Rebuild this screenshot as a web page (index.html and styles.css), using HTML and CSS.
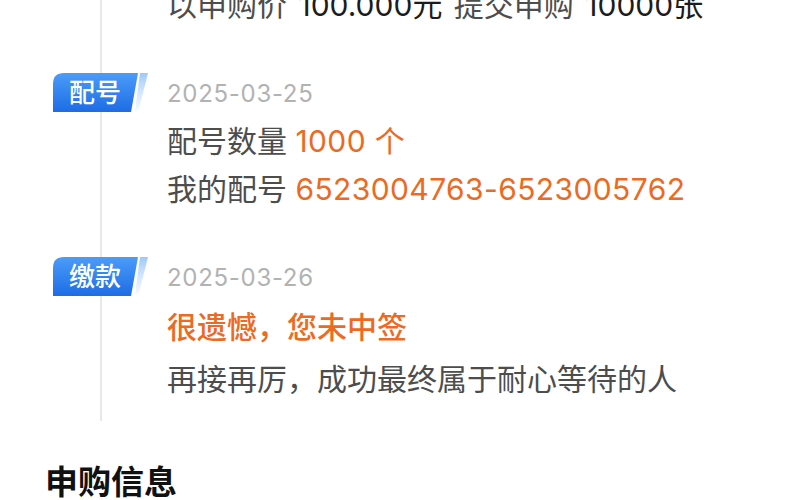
FILE: index.html
```html
<!DOCTYPE html>
<html lang="zh-CN">
<head>
<meta charset="utf-8">
<title>新股申购进度</title>
<link rel="stylesheet" href="styles.css">
</head>
<body>
<main class="page">
  <section class="timeline">
    <div class="step step-partial">
      <div class="step-side"></div>
      <div class="step-body">
        <p class="line summary"><span class="label">以申购价</span> <span class="strong">100.000元</span> <span class="label">提交申购</span> <span class="strong">10000张</span></p>
      </div>
    </div>

    <div class="step">
      <div class="step-side">
        <div class="badge">
          <svg class="badge-bg" viewBox="0 0 96 40" aria-hidden="true">
            <defs>
              <linearGradient id="bg1" x1="0" y1="0" x2="0" y2="1">
                <stop offset="0" stop-color="#4b9cf9"/>
                <stop offset="1" stop-color="#1d6ce6"/>
              </linearGradient>
              <linearGradient id="sl1" x1="0" y1="0" x2="0" y2="1">
                <stop offset="0" stop-color="#9cc8fa"/>
                <stop offset="1" stop-color="#d6e8fd" stop-opacity="0.3"/>
              </linearGradient>
            </defs>
            <path d="M87 0 H95 L86 36 L82 38 Z" fill="url(#sl1)"/>
            <path d="M11 0 H85 L78 39 H0 V11 Q0 0 11 0 Z" fill="url(#bg1)"/>
          </svg>
          <span class="badge-text">配号</span>
        </div>
      </div>
      <div class="step-body">
        <p class="date">2025-03-25</p>
        <p class="line"><span class="label">配号数量</span> <span class="accent">1000 个</span></p>
        <p class="line"><span class="label">我的配号</span> <span class="accent">6523004763-6523005762</span></p>
      </div>
    </div>

    <div class="step">
      <div class="step-side">
        <div class="badge">
          <svg class="badge-bg" viewBox="0 0 96 40" aria-hidden="true">
            <defs>
              <linearGradient id="bg2" x1="0" y1="0" x2="0" y2="1">
                <stop offset="0" stop-color="#4b9cf9"/>
                <stop offset="1" stop-color="#1d6ce6"/>
              </linearGradient>
              <linearGradient id="sl2" x1="0" y1="0" x2="0" y2="1">
                <stop offset="0" stop-color="#9cc8fa"/>
                <stop offset="1" stop-color="#d6e8fd" stop-opacity="0.3"/>
              </linearGradient>
            </defs>
            <path d="M87 0 H95 L86 36 L82 38 Z" fill="url(#sl2)"/>
            <path d="M11 0 H85 L78 39 H0 V11 Q0 0 11 0 Z" fill="url(#bg2)"/>
          </svg>
          <span class="badge-text">缴款</span>
        </div>
      </div>
      <div class="step-body">
        <p class="date">2025-03-26</p>
        <p class="line result">很遗憾，您未中签</p>
        <p class="line note"><span class="label">再接再厉，成功最终属于耐心等待的人</span></p>
      </div>
    </div>
  </section>

  <h2 class="section-title">申购信息</h2>
</main>
</body>
</html>
```

FILE: styles.css
```css
html, body {
  margin: 0;
  padding: 0;
  background: #ffffff;
}

body {
  width: 800px;
  height: 500px;
  overflow: hidden;
  font-family: "Inter", "Noto Sans CJK SC", sans-serif;
  color: #4a4a4a;
}

.page {
  display: flex;
  flex-direction: column;
}

/* vertical rail of the timeline, drawn behind the badges */
.timeline {
  margin: -19px 0 0 53px;
  padding-bottom: 16px;
  display: flex;
  flex-direction: column;
  gap: 42px;
  background: linear-gradient(#e8e8e8, #e8e8e8) no-repeat 47px 0 / 2px 100%;
}

.step {
  display: grid;
  grid-template-columns: 114px 1fr;
}

.step-side {
  padding-top: 2px;
}

.badge {
  position: relative;
  width: 96px;
  height: 40px;
  display: flex;
  align-items: center;
}

.badge-bg {
  position: absolute;
  inset: 0;
  width: 96px;
  height: 40px;
}

.badge-text {
  position: relative;
  width: 84px;
  text-align: center;
  color: #ffffff;
  font-size: 26px;
  font-weight: 500;
  line-height: 40px;
}

p {
  margin: 0;
}

.date {
  font-size: 24px;
  line-height: 46px;
  letter-spacing: 0.7px;
  color: #b2b2b2;
}

.line {
  font-size: 30px;
  line-height: 48px;
  white-space: nowrap;
}

.summary {
  word-spacing: 3px;
}

.label {
  color: #4d4d4d;
}

.strong {
  color: #1c1c1c;
}

.accent {
  color: #ec6a21;
  letter-spacing: 0.4px;
}

.result {
  color: #ec6a21;
  font-weight: 500;
  line-height: 52px;
}

.note {
  line-height: 52px;
}

.section-title {
  margin: 38px 0 0 45px;
  font-size: 33px;
  line-height: 46px;
  font-weight: 700;
  color: #111111;
}
```
